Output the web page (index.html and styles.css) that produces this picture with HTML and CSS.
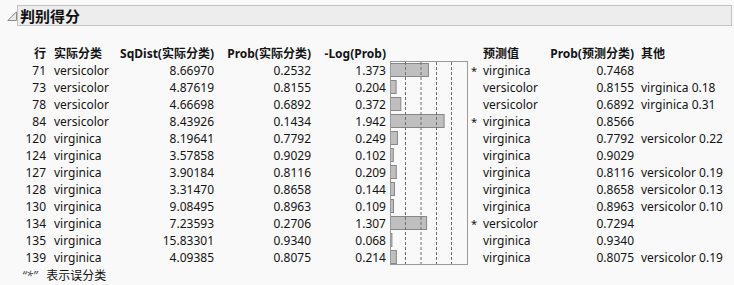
FILE: index.html
```html
<!DOCTYPE html>
<html lang="zh">
<head>
<meta charset="utf-8">
<title>判别得分</title>
<link rel="stylesheet" href="styles.css">
</head>
<body>
<div class="report">
  <div class="outline">
    <svg class="disclose" width="10" height="10" viewBox="0 0 10 10"><path d="M9.5 0.8 L9.5 9.5 L0.8 9.5 Z" fill="#e8e8e8" stroke="#8c8c8c" stroke-width="1"/></svg>
    <div class="title">判别得分</div>
  </div>
  <table class="scores">
    <colgroup>
      <col class="c-row"><col class="c-act"><col class="c-sq"><col class="c-pa"><col class="c-log"><col class="c-chart"><col class="c-star"><col class="c-pred"><col class="c-pp"><col class="c-other">
    </colgroup>
    <thead>
      <tr>
        <th class="r">行</th>
        <th class="l act">实际分类</th>
        <th class="r">SqDist(实际分类)</th>
        <th class="r">Prob(实际分类)</th>
        <th class="r log">-Log(Prob)</th>
        <th></th>
        <th></th>
        <th class="l pred">预测值</th>
        <th class="r">Prob(预测分类)</th>
        <th class="l other">其他</th>
      </tr>
    </thead>
    <tbody>
      <tr><td class="r">71</td><td class="act">versicolor</td><td class="r">8.66970</td><td class="r">0.2532</td><td class="r log">1.373</td>
        <td class="chart" rowspan="12">
          <svg width="78" height="204" viewBox="0 0 78 204">
            <g fill="#bfbfbf" stroke="#878787" stroke-width="1">
              <rect x="0.5" y="2.5" width="37.9" height="13"/>
              <rect x="0.5" y="19.5" width="5.6" height="13"/>
              <rect x="0.5" y="36.5" width="10.3" height="13"/>
              <rect x="0.5" y="53.5" width="53.6" height="13"/>
              <rect x="0.5" y="70.5" width="6.9" height="13"/>
              <rect x="0.5" y="87.5" width="2.8" height="13"/>
              <rect x="0.5" y="104.5" width="5.8" height="13"/>
              <rect x="0.5" y="121.5" width="4" height="13"/>
              <rect x="0.5" y="138.5" width="3" height="13"/>
              <rect x="0.5" y="155.5" width="36.1" height="13"/>
              <rect x="0.5" y="172.5" width="1.4" height="13"/>
              <rect x="0.5" y="189.5" width="5.9" height="13"/>
            </g>
            <g stroke="#6e6e6e" stroke-width="1" stroke-dasharray="3 2">
              <line x1="15.5" y1="1" x2="15.5" y2="203"/>
              <line x1="31" y1="1" x2="31" y2="203"/>
              <line x1="46.5" y1="1" x2="46.5" y2="203"/>
              <line x1="61.5" y1="1" x2="61.5" y2="203"/>
            </g>
            <rect x="0.5" y="0.5" width="77" height="203" fill="none" stroke="#9a9a9a" stroke-width="1"/>
          </svg>
        </td>
        <td class="star">*</td><td class="pred">virginica</td><td class="r">0.7468</td><td class="other"></td></tr>
      <tr><td class="r">73</td><td class="act">versicolor</td><td class="r">4.87619</td><td class="r">0.8155</td><td class="r log">0.204</td><td class="star"></td><td class="pred">versicolor</td><td class="r">0.8155</td><td class="other">virginica 0.18</td></tr>
      <tr><td class="r">78</td><td class="act">versicolor</td><td class="r">4.66698</td><td class="r">0.6892</td><td class="r log">0.372</td><td class="star"></td><td class="pred">versicolor</td><td class="r">0.6892</td><td class="other">virginica 0.31</td></tr>
      <tr><td class="r">84</td><td class="act">versicolor</td><td class="r">8.43926</td><td class="r">0.1434</td><td class="r log">1.942</td><td class="star">*</td><td class="pred">virginica</td><td class="r">0.8566</td><td class="other"></td></tr>
      <tr><td class="r">120</td><td class="act">virginica</td><td class="r">8.19641</td><td class="r">0.7792</td><td class="r log">0.249</td><td class="star"></td><td class="pred">virginica</td><td class="r">0.7792</td><td class="other">versicolor 0.22</td></tr>
      <tr><td class="r">124</td><td class="act">virginica</td><td class="r">3.57858</td><td class="r">0.9029</td><td class="r log">0.102</td><td class="star"></td><td class="pred">virginica</td><td class="r">0.9029</td><td class="other"></td></tr>
      <tr><td class="r">127</td><td class="act">virginica</td><td class="r">3.90184</td><td class="r">0.8116</td><td class="r log">0.209</td><td class="star"></td><td class="pred">virginica</td><td class="r">0.8116</td><td class="other">versicolor 0.19</td></tr>
      <tr><td class="r">128</td><td class="act">virginica</td><td class="r">3.31470</td><td class="r">0.8658</td><td class="r log">0.144</td><td class="star"></td><td class="pred">virginica</td><td class="r">0.8658</td><td class="other">versicolor 0.13</td></tr>
      <tr><td class="r">130</td><td class="act">virginica</td><td class="r">9.08495</td><td class="r">0.8963</td><td class="r log">0.109</td><td class="star"></td><td class="pred">virginica</td><td class="r">0.8963</td><td class="other">versicolor 0.10</td></tr>
      <tr><td class="r">134</td><td class="act">virginica</td><td class="r">7.23593</td><td class="r">0.2706</td><td class="r log">1.307</td><td class="star">*</td><td class="pred">versicolor</td><td class="r">0.7294</td><td class="other"></td></tr>
      <tr><td class="r">135</td><td class="act">virginica</td><td class="r">15.83301</td><td class="r">0.9340</td><td class="r log">0.068</td><td class="star"></td><td class="pred">virginica</td><td class="r">0.9340</td><td class="other"></td></tr>
      <tr><td class="r">139</td><td class="act">virginica</td><td class="r">4.09385</td><td class="r">0.8075</td><td class="r log">0.214</td><td class="star"></td><td class="pred">virginica</td><td class="r">0.8075</td><td class="other">versicolor 0.19</td></tr>
    </tbody>
  </table>
  <div class="note"><span class="q">“*”</span><span class="msg">表示误分类</span></div>
</div>
</body>
</html>
```

FILE: styles.css
```css
html, body {
  margin: 0;
  padding: 0;
  background: #f9f9f9;
}
body {
  font-family: "Noto Sans", "Noto Sans CJK SC", sans-serif;
  font-size: 12px;
  color: #141414;
}
.report {
  padding: 5px 2px 0 7px;
}
.outline {
  display: flex;
  align-items: center;
}
.disclose {
  flex: none;
  margin-top: 1px;
}
.title {
  flex: 1;
  height: 19px;
  line-height: 19px;
  background: #ededed;
  border: 1px solid #c2c2c2;
  font-family: "Noto Sans CJK SC", sans-serif;
  font-weight: 700;
  font-size: 15px;
  padding-left: 2px;
  color: #111;
}
.scores {
  border-collapse: collapse;
  table-layout: fixed;
  width: 725px;
  margin-top: 17px;
  margin-left: 1px;
}
.c-row { width: 40px; }
.c-act { width: 70px; }
.c-sq { width: 98px; }
.c-pa { width: 97px; }
.c-log { width: 77px; }
.c-chart { width: 77px; }
.c-star { width: 14px; }
.c-pred { width: 65px; }
.c-pp { width: 90px; }
.c-other { width: 97px; }
th, td {
  padding: 3px 0 0 0;
  line-height: 14px;
  white-space: nowrap;
}
th {
  font-weight: 700;
  padding-top: 4px;
}
td {
  font-weight: 400;
}
.r { text-align: right; padding-right: 2px; }
.l { text-align: left; }
.act { padding-left: 6px; text-align: left; }
.log { padding-right: 4px; }
.pred { padding-left: 2px; text-align: left; }
.other { padding-left: 5px; text-align: left; }
.star { text-align: center; font-size: 11px; }
.chart {
  padding: 0;
  vertical-align: top;
  height: 204px;
  line-height: 0;
}
.chart svg { display: block; }
.note {
  display: flex;
  align-items: baseline;
  gap: 9px;
  font-size: 12px;
  margin-top: 1px;
  padding-left: 15px;
  line-height: 17px;
  font-family: "Noto Sans CJK SC", sans-serif;
}
.note .q { color: #555; font-style: italic; font-family: "Noto Sans", sans-serif; }
```
